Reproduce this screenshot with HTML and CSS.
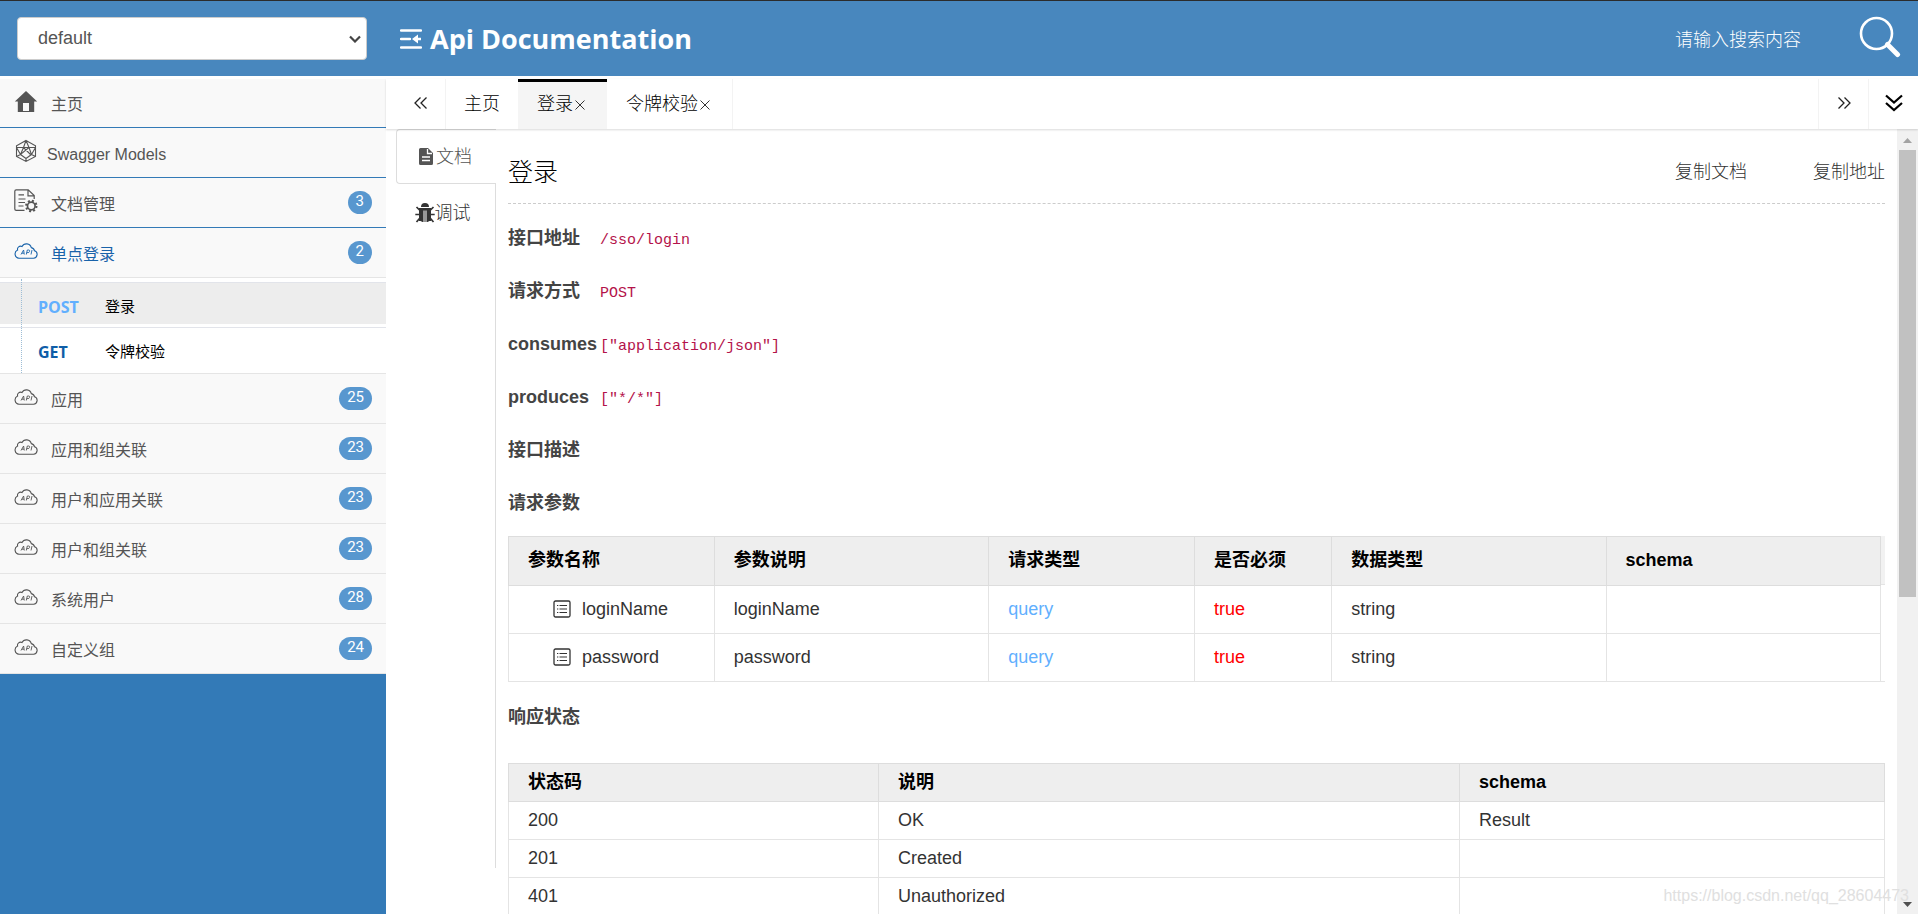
FILE: index.html
```html
<!DOCTYPE html>
<html lang="zh-CN">
<head>
<meta charset="utf-8">
<title>Api Documentation</title>
<link rel="stylesheet" href="styles.css">
</head>
<body>
<svg class="defs" aria-hidden="true">
  <symbol id="cloud" viewBox="0 0 24 16">
    <path d="M5 15.200h14.500a3.800 3.800 0 0 0 1-7.400A4 4 0 0 0 17.300 4.600 5 5 0 0 0 8 3.600 3 3 0 0 0 3.600 7 4.300 4.300 0 0 0 5 15.200z" fill="none" stroke="currentColor" stroke-width="1.100"/>
    <path d="M7 11.500l2.600-4.500.7 4.500M7.900 10.200h2.100M12.300 11.500l1-4.500h1.500c1.400 0 1 2.600-.6 2.600h-1.400M17 11.500l1-4.500" fill="none" stroke="currentColor" stroke-width=".9"/>
  </symbol>
  <symbol id="field" viewBox="0 0 18 18">
    <rect x="1" y="1" width="16" height="16" rx="1.500" fill="none" stroke="currentColor" stroke-width="1.300"/>
    <path d="M4 5.500h1.300M4 9h1.300M4 12.500h1.300M6.500 5.500H14M6.500 9H14M6.500 12.500H14" stroke="currentColor" stroke-width="1.100"/>
  </symbol>
</svg>
<header class="top">
  <div class="picker">
    <select class="group-select" aria-label="分组"><option>default</option></select>
    <svg class="caret" viewBox="0 0 12 8"><path d="M1 1.500l5 5 5-5" fill="none" stroke="#444" stroke-width="2.200"/></svg>
  </div>
  <div class="brand">
    <svg class="brand-icon" viewBox="0 0 22 20"><path d="M1 1.500h20M1 10h9M1 18.500h20" stroke="#fff" stroke-width="2.400" stroke-linecap="round"/><path d="M12 10l6-4.500v3.300h3v2.400h-3v3.300z" fill="#fff"/></svg>
    <h1 class="brand-name">Api Documentation</h1>
  </div>
  <input class="search" type="text" placeholder="请输入搜索内容" aria-label="搜索">
  <button class="search-btn" aria-label="搜索"><svg viewBox="0 0 42 42"><circle cx="17.500" cy="17.500" r="15.500" fill="none" stroke="#fff" stroke-width="2.600"/><path d="M28.500 28.500l10 10" stroke="#fff" stroke-width="5" stroke-linecap="round"/></svg></button>
</header>
<div class="body">
  <nav class="side">
    <a class="item accent" href="#"><svg class="ico" viewBox="0 0 24 24"><path d="M12 1L.8 11.400h3V22h16.400V11.400h3z" fill="currentColor"/><path d="M9 13h6v8H9z" fill="#f9f9f9"/></svg><span class="label">主页</span></a>
    <a class="item accent" href="#"><svg class="ico" viewBox="0 0 24 24"><path d="M12 1.500l9.500 5.300v10.600L12 22.500l-9.500-5.100V6.800zM2.500 8.500h19M12 1.500L9.500 8.500M12 1.500l3 7 2.500 7-5.500 4-5.500-4 3-7 7 7M2.500 8.500l4 7 8.500-7M2.500 17.400l4-1.900M21.500 8.500l-4 7 4 1.900M12 22.500v-3" fill="none" stroke="currentColor" stroke-width="1.100"/></svg><span class="label latin">Swagger Models</span></a>
    <a class="item accent" href="#"><svg class="ico" viewBox="0 0 24 24"><path d="M10.500 21.300H2.200a1.400 1.400 0 0 1-1.400-1.400V2.200A1.400 1.400 0 0 1 2.200.8h12l6 5.700v3.500M14 .8v6h6M4.500 5.800h5.500M4.500 10h7M4.500 13.500h6.500M4.500 17h5" fill="none" stroke="currentColor" stroke-width="1.200"/><circle cx="17.300" cy="17" r="3.800" fill="none" stroke="currentColor" stroke-width="1.700"/><circle cx="17.300" cy="17" r="5.200" fill="none" stroke="currentColor" stroke-width="2" stroke-dasharray="2 2.080"/></svg><span class="label">文档管理</span><span class="badge">3</span></a>
    <a class="item current" href="#"><svg class="ico cloud"><use href="#cloud"/></svg><span class="label">单点登录</span><span class="badge">2</span></a>
    <div class="sub">
      <a class="api active" href="#"><span class="verb post">POST</span><span>登录</span></a>
      <a class="api" href="#"><span class="verb get">GET</span><span>令牌校验</span></a>
    </div>
    <a class="item" href="#"><svg class="ico cloud"><use href="#cloud"/></svg><span class="label">应用</span><span class="badge">25</span></a>
    <a class="item" href="#"><svg class="ico cloud"><use href="#cloud"/></svg><span class="label">应用和组关联</span><span class="badge">23</span></a>
    <a class="item" href="#"><svg class="ico cloud"><use href="#cloud"/></svg><span class="label">用户和应用关联</span><span class="badge">23</span></a>
    <a class="item" href="#"><svg class="ico cloud"><use href="#cloud"/></svg><span class="label">用户和组关联</span><span class="badge">23</span></a>
    <a class="item" href="#"><svg class="ico cloud"><use href="#cloud"/></svg><span class="label">系统用户</span><span class="badge">28</span></a>
    <a class="item" href="#"><svg class="ico cloud"><use href="#cloud"/></svg><span class="label">自定义组</span><span class="badge">24</span></a>
  </nav>
  <main class="main">
    <div class="tabs">
      <button class="tool first" aria-label="向左"><svg viewBox="0 0 14 12" width="14" height="12"><path d="M6.500.5L1 6l5.500 5.500M12.500.5L7 6l5.500 5.500" fill="none" stroke="#222" stroke-width="1.300"/></svg></button>
      <button class="tab">主页</button>
      <button class="tab on">登录<svg class="x" viewBox="0 0 10 10"><path d="M.5.5l9 9M9.500.5l-9 9" stroke="#333" stroke-width="1"/></svg></button>
      <button class="tab last">令牌校验<svg class="x" viewBox="0 0 10 10"><path d="M.5.5l9 9M9.500.5l-9 9" stroke="#333" stroke-width="1"/></svg></button>
      <span class="fill"></span>
      <button class="tool" aria-label="向右"><svg viewBox="0 0 14 12" width="14" height="12"><path d="M1.500.5L7 6l-5.500 5.500M7.500.5L13 6l-5.500 5.500" fill="none" stroke="#222" stroke-width="1.300"/></svg></button>
      <button class="tool" aria-label="更多"><svg viewBox="0 0 18 18" width="18" height="18"><path d="M1 1.500l8 7 8-7M1 9l8 7 8-7" fill="none" stroke="#000" stroke-width="2.200"/></svg></button>
    </div>
    <div class="work">
      <div class="modes">
        <button class="mode on"><svg width="14" height="17" viewBox="0 0 14 17"><path d="M1.500 0H9l5 5v10.500a1.500 1.500 0 0 1-1.500 1.500h-11A1.500 1.500 0 0 1 0 15.500v-14A1.500 1.500 0 0 1 1.500 0z" fill="#555"/><path d="M8.500 1v4.500H13M3 9h8M3 12.500h8" fill="none" stroke="#fff" stroke-width="1.300"/></svg>文档</button>
        <button class="mode"><svg width="20" height="20" viewBox="0 0 20 20"><path d="M6 4a4 4 0 0 1 8 0zM4 5h12v13h-1.500l-2 1h-5l-2-1H4z" fill="#333"/><path d="M9 7.500v11.500M11 7.500v11.500" stroke="#fff" stroke-width="1"/><path d="M4.500 7L1.500 4M15.500 7l3-3M4 11.500H.3M16 11.500h3.700M4.500 15.500l-3 3.500M15.500 15.500l3 3.500" stroke="#333" stroke-width="1.700"/></svg>调试</button>
      </div>
      <article class="doc">
        <div class="head"><h2 class="title">登录</h2><div class="actions"><a href="#">复制文档</a><a href="#">复制地址</a></div></div>
        <dl class="info">
          <dt>接口地址</dt><dd>/sso/login</dd>
          <dt>请求方式</dt><dd>POST</dd>
          <dt>consumes</dt><dd>["application/json"]</dd>
          <dt>produces</dt><dd>["*/*"]</dd>
          <dt>接口描述</dt><dd></dd>
          <dt>请求参数</dt><dd></dd>
        </dl>
        <div class="tree">
          <table class="grid params">
            <colgroup><col class="w15"><col class="w20"><col class="w15"><col class="w10"><col class="w20"><col class="w20"></colgroup>
            <thead><tr><th>参数名称</th><th>参数说明</th><th>请求类型</th><th>是否必须</th><th>数据类型</th><th>schema</th></tr></thead>
            <tbody>
              <tr><td><span class="leaf"><svg width="18" height="18"><use href="#field"/></svg>loginName</span></td><td>loginName</td><td class="query">query</td><td class="must">true</td><td>string</td><td></td></tr>
              <tr><td><span class="leaf"><svg width="18" height="18"><use href="#field"/></svg>password</span></td><td>password</td><td class="query">query</td><td class="must">true</td><td>string</td><td></td></tr>
            </tbody>
          </table>
          <div class="gutter"></div>
        </div>
        <h3 class="section">响应状态</h3>
        <table class="grid status">
          <colgroup><col class="s1"><col class="s2"><col></colgroup>
          <thead><tr><th>状态码</th><th>说明</th><th>schema</th></tr></thead>
          <tbody>
            <tr><td>200</td><td>OK</td><td>Result</td></tr>
            <tr><td>201</td><td>Created</td><td></td></tr>
            <tr><td>401</td><td>Unauthorized</td><td></td></tr>
          </tbody>
        </table>
      </article>
      <div class="bar" aria-hidden="true">
        <svg class="arrow" viewBox="0 0 21 21"><path d="M6 14h9l-4.500-5z" fill="#a3a3a3"/></svg>
        <div class="thumb"></div>
        <svg class="arrow" viewBox="0 0 21 21"><path d="M6 9h9l-4.500 5z" fill="#505050"/></svg>
      </div>
    </div>
  </main>
</div>
<div class="mark">https://blog.csdn.net/qq_28604473</div>
</body>
</html>
```
FILE: styles.css
```css
* { box-sizing: border-box; }
body {
  margin: 0;
  height: 100vh;
  display: flex;
  flex-direction: column;
  overflow: hidden;
  position: relative;
  background: #fff;
  color: #333;
  font: 300 18px/26px "Liberation Sans", "Noto Sans CJK SC", sans-serif;
}
a { color: inherit; text-decoration: none; }
button { font: inherit; color: inherit; border: 0; background: none; padding: 0; margin: 0; }
h1, h2, h3, dl, dd { margin: 0; }
.defs { position: absolute; width: 0; height: 0; }

/* header */
.top {
  flex: none;
  display: flex;
  align-items: center;
  height: 76px;
  margin-bottom: 3px;
  padding: 0 17px;
  border-top: 1px solid #2b2b2b;
  background: #4887be;
  color: #fff;
}
.picker { position: relative; width: 350px; }
.group-select {
  appearance: none;
  display: block;
  width: 100%;
  height: 43px;
  padding: 0 20px 1px;
  border: 1px solid #ccc;
  border-radius: 4px;
  background: #fff;
  color: #555;
  font: 18px "Liberation Sans", sans-serif;
}
.caret { position: absolute; right: 6px; top: 18px; width: 12px; height: 8px; }
.brand { display: flex; align-items: center; gap: 8px; margin-left: 33px; }
.brand-icon { width: 22px; height: 20px; }
.brand-name { font: 700 27px/38px "Open Sans", sans-serif; }
.search {
  width: 150px;
  margin-left: auto;
  padding: 0 0 2px;
  border: 0;
  background: none;
  color: #fff;
  font: 300 18px/26px "Noto Sans CJK SC", sans-serif;
}
.search::placeholder { color: #fff; opacity: 1; }
.search-btn { width: 42px; height: 46px; margin-left: 34px; padding-bottom: 4px; }
.search-btn svg { display: block; }

.body { flex: 1; display: flex; min-height: 0; }

/* sidebar */
.side { flex: none; width: 386px; background: #337ab7; color: #555; }
.item {
  display: flex;
  align-items: center;
  height: 50px;
  padding: 0 14px;
  border-bottom: 1px solid #e5e5e5;
  background: #f9f9f9;
  font-size: 16px;
  font-weight: 400;
}
.accent { border-bottom-color: #337ab7; }
.accent:first-child { height: 49px; }
.current { color: #1963aa; }
.ico { width: 24px; height: 24px; margin: 0 13px 3px 0; }
.cloud { height: 16px; }
.label { padding-top: 4px; }
.latin { margin-left: -4px; }
.badge {
  min-width: 24px;
  margin-left: auto;
  padding: 0 8px 3px;
  border-radius: 12px;
  background: #5897cf;
  color: #fff;
  font: 400 15px/20px Roboto, sans-serif;
  text-align: center;
}
.sub { position: relative; padding-top: 4px; background: #fff; border-bottom: 1px solid #e5e5e5; color: #000; }
.sub::before { content: ""; position: absolute; left: 21px; top: 1px; bottom: 0; border-left: 1px dotted #9dbdd6; }
.api {
  display: flex;
  align-items: center;
  height: 46px;
  padding: 3px 0 0 38px;
  border-top: 1px solid #e2e4ea;
  font-size: 15px;
  font-weight: 400;
}
.api.active { background: #ededed; height: 42px; margin-bottom: 3px; padding-top: 6px; }
.verb { width: 67px; font: 700 16px/24px "Open Sans", sans-serif; }
.post { color: #61affe; }
.get { color: #0f5ea8; }

/* tabs */
.main { flex: 1; min-width: 0; display: flex; flex-direction: column; }
.tabs {
  flex: none;
  display: flex;
  height: 50px;
  padding-left: 10px;
  box-shadow: 0 1px 2px rgba(0, 0, 0, .15);
  position: relative;
  color: #000;
}
.tool { width: 50px; border-left: 1px solid #f3f3f3; display: flex; align-items: center; justify-content: center; padding-bottom: 2px; }
.tool.first { border-left: 0; border-right: 1px solid #f3f3f3; }
.tab { display: flex; align-items: center; padding: 0 18px; }
.tab.on { background: #f5f5f5; border-top: 3px solid #000; padding: 0 19px 3px; }
.tab.last { padding: 0 19px; border-right: 1px solid #f3f3f3; }
.x { width: 10px; height: 10px; margin: 2px 3px 0 2px; }
.fill { flex: 1; }

/* work area */
.work { flex: 1; display: flex; min-height: 0; }
.modes { flex: none; width: 110px; padding-left: 10px; margin-bottom: 46px; display: flex; flex-direction: column; }
.modes::after { content: ""; flex: 1; border-right: 1px solid #ddd; }
.mode { display: flex; align-items: center; justify-content: center; gap: 3px; height: 55px; flex: none; border-right: 1px solid #ddd; color: #333; }
.mode.on { border: 1px solid #ddd; border-right: 0; border-radius: 4px 0 0 4px; padding-right: 2px; color: #555; }
.mode + .mode { gap: 0; padding-right: 6px; height: 58px; }
.doc { flex: 1; min-width: 0; padding: 0 12px; }
.head { display: flex; align-items: center; justify-content: space-between; height: 75px; padding-top: 12px; border-bottom: 1px dashed #ccc; }
.title { font-size: 25px; font-weight: 300; line-height: 32px; color: #000; }
.actions { display: flex; gap: 66px; }
.info { display: grid; grid-template-columns: 92px 1fr; padding-top: 21px; grid-auto-rows: 26px; row-gap: 27px; padding-bottom: 20px; }
dt, .section { font-weight: 700; font-size: 18px; line-height: 26px; color: #444; }
dd { color: #b4124a; font: 15px/31px "Liberation Mono", monospace; }

.grid { border-collapse: collapse; table-layout: fixed; width: 100%; }
.grid th, .grid td { border: 1px solid #e4e4e4; padding: 0 19px; text-align: left; font-weight: 400; }
.grid th { background: #eee; border-color: #ddd; color: #000; font-weight: 700; }
.tree { display: grid; grid-template-columns: 1fr 4px; border-bottom: 1px solid #e4e4e4; }
.params { margin-bottom: -1px; }
.params th { height: 49px; }
.params td { height: 48px; }
.params tr > * { padding-bottom: 2px; }
.w10 { width: 10%; }
.w15 { width: 15%; }
.w20 { width: 20%; }
.gutter { height: 49px; background: #f2f2f2; border-bottom: 1px solid #e4e4e4; }
.leaf { display: flex; align-items: center; gap: 11px; padding-left: 25px; }
.grid .query { color: #61affe; }
.grid .must { color: #f00; }
.section { margin: 22px 0 33px; }
.status tr > * { height: 38px; }
.status tr > * { padding-bottom: 2px; }
.s1 { width: 370px; }
.s2 { width: 581px; }

/* scrollbar */
.bar { flex: none; width: 21px; display: flex; flex-direction: column; background: #f1f1f1; }
.arrow { flex: none; width: 21px; height: 21px; }
.thumb { height: 57%; margin: 0 2px auto; background: #c1c1c1; }

.mark { position: absolute; right: 9px; bottom: 5px; color: #e0e0e0; font: 16px/26px "Liberation Sans", sans-serif; }
```
